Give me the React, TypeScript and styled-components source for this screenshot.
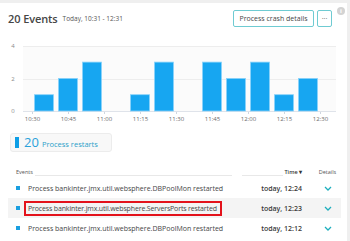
import React from 'react'
import styled, { createGlobalStyle } from 'styled-components'

const GlobalStyle = createGlobalStyle`
  body {
    margin: 0;
    background: #efefef;
    font-family: "Open Sans", "Noto Sans", sans-serif;
    color: #454646;
  }
`

const Card = styled.div`
  box-sizing: border-box;
  margin-top: 3px;
  width: 347px;
  height: 238px;
  background: #ffffff;
  padding-top: 7px;
  overflow: hidden;
`

const Header = styled.div`
  display: flex;
  align-items: center;
  height: 17px;
  padding: 0 2px 0 8px;
`

const Title = styled.h1`
  margin: 0;
  font-size: 11px;
  font-weight: 600;
  color: #454646;
  letter-spacing: -0.1px;
`

const Range = styled.span`
  margin-left: 5px;
  font-size: 6.5px;
  color: #555;
`

const Button = styled.button<{ $w: number }>`
  box-sizing: border-box;
  width: ${(p) => p.$w}px;
  height: 17px;
  padding: 0;
  border: 1px solid #6fcbd2;
  border-radius: 2px;
  background: #fff;
  font-family: inherit;
  font-size: 7px;
  color: #454646;
  &:first-of-type {
    margin-left: auto;
  }
  & + & {
    margin-left: 3px;
  }
`

const Info = styled.span`
  align-self: flex-start;
  margin: -3px 0 0 5px;
  width: 8px;
  height: 8px;
  border-radius: 50%;
  background: #d3d3d3;
  color: #fff;
  font-size: 6px;
  font-weight: 700;
  line-height: 8px;
  text-align: center;
`

const Chart = styled.svg`
  display: block;
  margin-top: 11px;
  font-family: "Open Sans", sans-serif;
`

const StatBox = styled.div`
  box-sizing: border-box;
  display: flex;
  align-items: center;
  margin: 7px 0 0 10px;
  width: 102px;
  height: 19px;
  background: #f8f8f8;
  border: 1px solid #ececec;
  border-radius: 3px;
`

const Marker = styled.span`
  margin-left: 4px;
  width: 4px;
  height: 11px;
  background: #0d9ee6;
`

const StatValue = styled.span`
  margin-left: 5px;
  font-size: 13px;
  line-height: 1;
  color: #2aa2db;
`

const StatLabel = styled.span`
  margin: 2px 0 0 3px;
  font-size: 7.5px;
  color: #2b9fc9;
`

const Table = styled.div`
  margin: 11px 0 0 8px;
  width: 333px;
`

const Row = styled.div<{ $alt?: boolean }>`
  display: grid;
  grid-template-columns: 226px 62px 39px;
  column-gap: 6px;
  align-items: center;
  height: 20px;
  background: ${(p) => (p.$alt ? '#f4f4f4' : 'transparent')};
`

const HeadRow = styled(Row)`
  height: 14px;
  align-items: end;
  margin-bottom: 1px;
`

const HeadCell = styled.div<{ $bold?: boolean; $center?: boolean }>`
  display: flex;
  align-items: flex-end;
  justify-content: ${(p) => (p.$center ? 'center' : 'flex-start')};
  padding-left: ${(p) => (p.$bold || p.$center ? 0 : 8)}px;
  font-size: 5.5px;
  font-weight: ${(p) => (p.$bold ? 600 : 400)};
  color: ${(p) => (p.$bold ? '#333' : '#555')};
  line-height: 9px;
`

const Rule = styled.span`
  flex: 1;
  height: 1px;
  margin: 0 2px 1px 2px;
  background: #e8e8e8;
`

const EventCell = styled.div`
  display: flex;
  align-items: center;
  padding-left: 8px;
  font-size: 7px;
  color: #454646;
  white-space: nowrap;
`

const Bullet = styled.span`
  width: 4px;
  height: 4px;
  margin-right: 8px;
  background: #1a9fe0;
`

const Marked = styled.span`
  display: inline-block;
  margin: 1px 0 0 -4px;
  padding: 0 3px 0 2px;
  line-height: 11px;
  letter-spacing: -0.15px;
  border: 2px solid #e3121b;
`

const TimeCell = styled.div`
  text-align: right;
  font-size: 7px;
  font-weight: 600;
  color: #3a3a3a;
`

const DetailCell = styled.div`
  display: flex;
  justify-content: center;
`

const bars = [1, 2, 3, 0, 1, 3, 0, 3, 2, 3, 1, 2]
const ticks = ['10:30', '10:45', '11:00', '11:15', '11:30', '11:45', '12:00', '12:15', '12:30']

const events = [
  { text: 'Process bankinter.jmx.util.websphere.DBPoolMon restarted', time: 'today, 12:24' },
  { text: 'Process bankinter.jmx.util.websphere.ServersPorts restarted', time: 'today, 12:23', marked: true },
  { text: 'Process bankinter.jmx.util.websphere.DBPoolMon restarted', time: 'today, 12:12' },
]

function Chevron() {
  return (
    <svg width="8" height="5" viewBox="0 0 8 5">
      <path d="M1 1 L4 4 L7 1" fill="none" stroke="#1eaebd" strokeWidth="1.3" />
    </svg>
  )
}

function EventsChart() {
  const unit = 16.3
  const base = 111
  return (
    <Chart width={347} height={88} viewBox="0 38 347 88">
      <rect x={23} y={46} width={313} height={65} fill="#fbfbfb" />
      <line x1={23} x2={336} y1={46.5} y2={46.5} stroke="#ededed" />
      <line x1={23} x2={336} y1={79.5} y2={79.5} stroke="#ededed" />
      <line x1={23} x2={336} y1={111.5} y2={111.5} stroke="#dfe3ea" />
      {['4', '2', '0'].map((t, i) => (
        <text key={t} x={13} y={48 + i * 32.5} fontSize={6} fill="#8a8a8a" textAnchor="middle">
          {t}
        </text>
      ))}
      {bars.map((v, i) =>
        v ? (
          <rect
            key={i}
            x={34.5 + i * 24}
            y={base - v * unit}
            width={19}
            height={v * unit}
            fill="#17a6f1"
            stroke="#8ad3fa"
            strokeWidth={0.8}
          />
        ) : null,
      )}
      {ticks.map((t, i) => (
        <g key={t}>
          <line x1={32.5 + i * 36} x2={32.5 + i * 36} y1={112} y2={114} stroke="#cfd6e0" />
          <text x={32.5 + i * 36} y={121} fontSize={6} fill="#6a6a6a" textAnchor="middle">
            {t}
          </text>
        </g>
      ))}
    </Chart>
  )
}

export default function App() {
  return (
    <>
      <GlobalStyle />
      <Card>
        <Header>
          <Title>20 Events</Title>
          <Range>Today, 10:31 - 12:31</Range>
          <Button $w={81}>Process crash details</Button>
          <Button $w={15}>···</Button>
          <Info>i</Info>
        </Header>

        <EventsChart />

        <StatBox>
          <Marker />
          <StatValue>20</StatValue>
          <StatLabel>Process restarts</StatLabel>
        </StatBox>

        <Table>
          <HeadRow>
            <HeadCell>
              Events
              <Rule />
            </HeadCell>
            <HeadCell $bold>
              <Rule />
              Time ▾
            </HeadCell>
            <HeadCell $center>Details</HeadCell>
          </HeadRow>
          {events.map((e, i) => (
            <Row key={i} $alt={i === 1}>
              <EventCell>
                <Bullet />
                {e.marked ? <Marked>{e.text}</Marked> : e.text}
              </EventCell>
              <TimeCell>{e.time}</TimeCell>
              <DetailCell>
                <Chevron />
              </DetailCell>
            </Row>
          ))}
        </Table>
      </Card>
    </>
  )
}
